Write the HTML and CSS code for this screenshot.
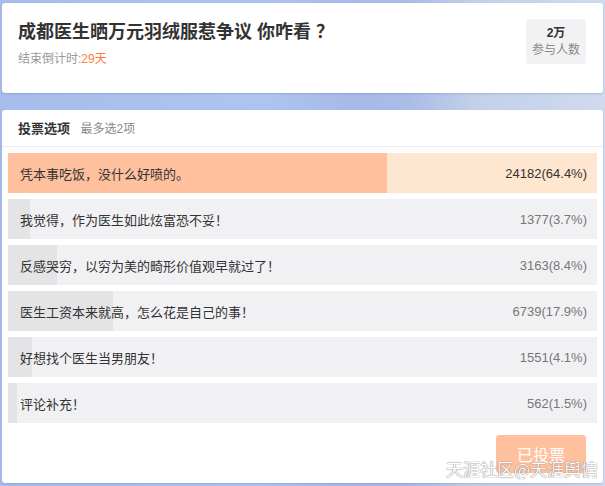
FILE: index.html
```html
<!DOCTYPE html>
<html lang="zh-CN">
<head>
    <meta charset="UTF-8">
    <meta name="viewport" content="width=device-width, initial-scale=1.0">
    <title>投票</title>
    <link rel="stylesheet" href="styles.css">
</head>
<body>
    <div class="card head-card">
        <div class="head-info">
            <h1 class="title">成都医生晒万元羽绒服惹争议 你咋看 ？</h1>
            <div class="countdown">结束倒计时:<span class="days">29天</span></div>
        </div>
        <div class="joined">
            <div class="joined-num">2万</div>
            <div class="joined-label">参与人数</div>
        </div>
    </div>

    <div class="card vote-card">
        <div class="vote-head">
            <span class="vote-title">投票选项</span>
            <span class="vote-tip">最多选2项</span>
        </div>
        <div class="options">
            <div class="option top">
                <div class="fill" style="width: 64.4%"></div>
                <span class="opt-text">凭本事吃饭，没什么好喷的。</span>
                <span class="opt-count">24182(64.4%)</span>
            </div>
            <div class="option">
                <div class="fill" style="width: 3.7%"></div>
                <span class="opt-text">我觉得，作为医生如此炫富恐不妥！</span>
                <span class="opt-count">1377(3.7%)</span>
            </div>
            <div class="option">
                <div class="fill" style="width: 8.4%"></div>
                <span class="opt-text">反感哭穷，以穷为美的畸形价值观早就过了！</span>
                <span class="opt-count">3163(8.4%)</span>
            </div>
            <div class="option">
                <div class="fill" style="width: 17.9%"></div>
                <span class="opt-text">医生工资本来就高，怎么花是自己的事！</span>
                <span class="opt-count">6739(17.9%)</span>
            </div>
            <div class="option">
                <div class="fill" style="width: 4.1%"></div>
                <span class="opt-text">好想找个医生当男朋友！</span>
                <span class="opt-count">1551(4.1%)</span>
            </div>
            <div class="option">
                <div class="fill" style="width: 1.5%"></div>
                <span class="opt-text">评论补充！</span>
                <span class="opt-count">562(1.5%)</span>
            </div>
        </div>
        <div class="vote-foot">
            <button class="voted">已投票</button>
        </div>
        <div class="watermark">天涯社区@天涯舆情</div>
    </div>
</body>
</html>
```

FILE: styles.css
```css
*{
    box-sizing: border-box;
}
body{
    margin: 0;
    padding: 3px 2px 4px 2px;
    font-family: "Liberation Sans", "Noto Sans CJK SC", sans-serif;
    color: #333;
    background:
        linear-gradient(to right, #a6bdeb 0%, #adc5ee 44%, #a7b9e8 58%, #abbce7 68%, #c2d0ea 78%, #d0daee 100%);
    min-height: 486px;
    overflow: hidden;
}
.card{
    background: #fff;
    border-radius: 3px;
    box-shadow: 0 1px 2px rgba(80, 100, 150, 0.25);
}
.head-card{
    height: 90px;
    display: flex;
    justify-content: space-between;
    align-items: flex-start;
    padding: 16px 17px 0 16px;
}
.title{
    margin: 4px 0 0 0;
    font-size: 18px;
    line-height: 18px;
    font-weight: bold;
    color: #333;
}
.countdown{
    margin-top: 10px;
    font-size: 12px;
    line-height: 16px;
    color: #999;
}
.days{
    color: #ff7e3c;
}
.joined{
    width: 60px;
    height: 45px;
    background: #f2f2f4;
    border-radius: 3px;
    text-align: center;
    padding-top: 6px;
    font-size: 12px;
    line-height: 17px;
}
.joined-num{
    color: #333;
    font-weight: bold;
}
.joined-label{
    color: #888;
}

.vote-card{
    position: relative;
    margin-top: 17px;
    height: 373px;
}
.vote-head{
    height: 37px;
    padding: 8px 0 0 16px;
    border-bottom: 1px solid #ececf0;
}
.vote-title{
    font-size: 13px;
    font-weight: bold;
    color: #333;
}
.vote-tip{
    font-size: 12px;
    color: #888;
    margin-left: 6px;
}
.options{
    display: flex;
    flex-direction: column;
    gap: 6px;
    padding: 6px 6px 0 6px;
}
.option{
    position: relative;
    height: 40px;
    background: #f1f1f3;
    display: flex;
    justify-content: space-between;
    align-items: center;
    padding: 0 10px 0 12px;
    font-size: 13px;
}
.option .fill{
    position: absolute;
    left: 0;
    top: 0;
    bottom: 0;
    background: #e4e4e6;
}
.option.top{
    background: #ffe6d0;
}
.option.top .fill{
    background: #ffc09e;
}
.opt-text, .opt-count{
    position: relative;
}
.opt-text{
    color: #333;
}
.opt-count{
    color: #777;
}
.option.top .opt-count{
    color: #333;
}
.vote-foot{
    display: flex;
    justify-content: flex-end;
    padding: 12px 17px 0 0;
}
.voted{
    width: 90px;
    height: 38px;
    border: none;
    border-radius: 3px;
    background: #ffc09e;
    color: #fff;
    font-family: "Liberation Sans", "Noto Sans CJK SC", sans-serif;
    font-size: 16px;
}
.watermark{
    position: absolute;
    right: 5px;
    bottom: 2px;
    font-family: "Noto Sans CJK SC", sans-serif;
    font-size: 17px;
    color: #fff;
    text-shadow: 0 0 1px #777, 0 0 1px #777;
    opacity: 0.9;
}
```
